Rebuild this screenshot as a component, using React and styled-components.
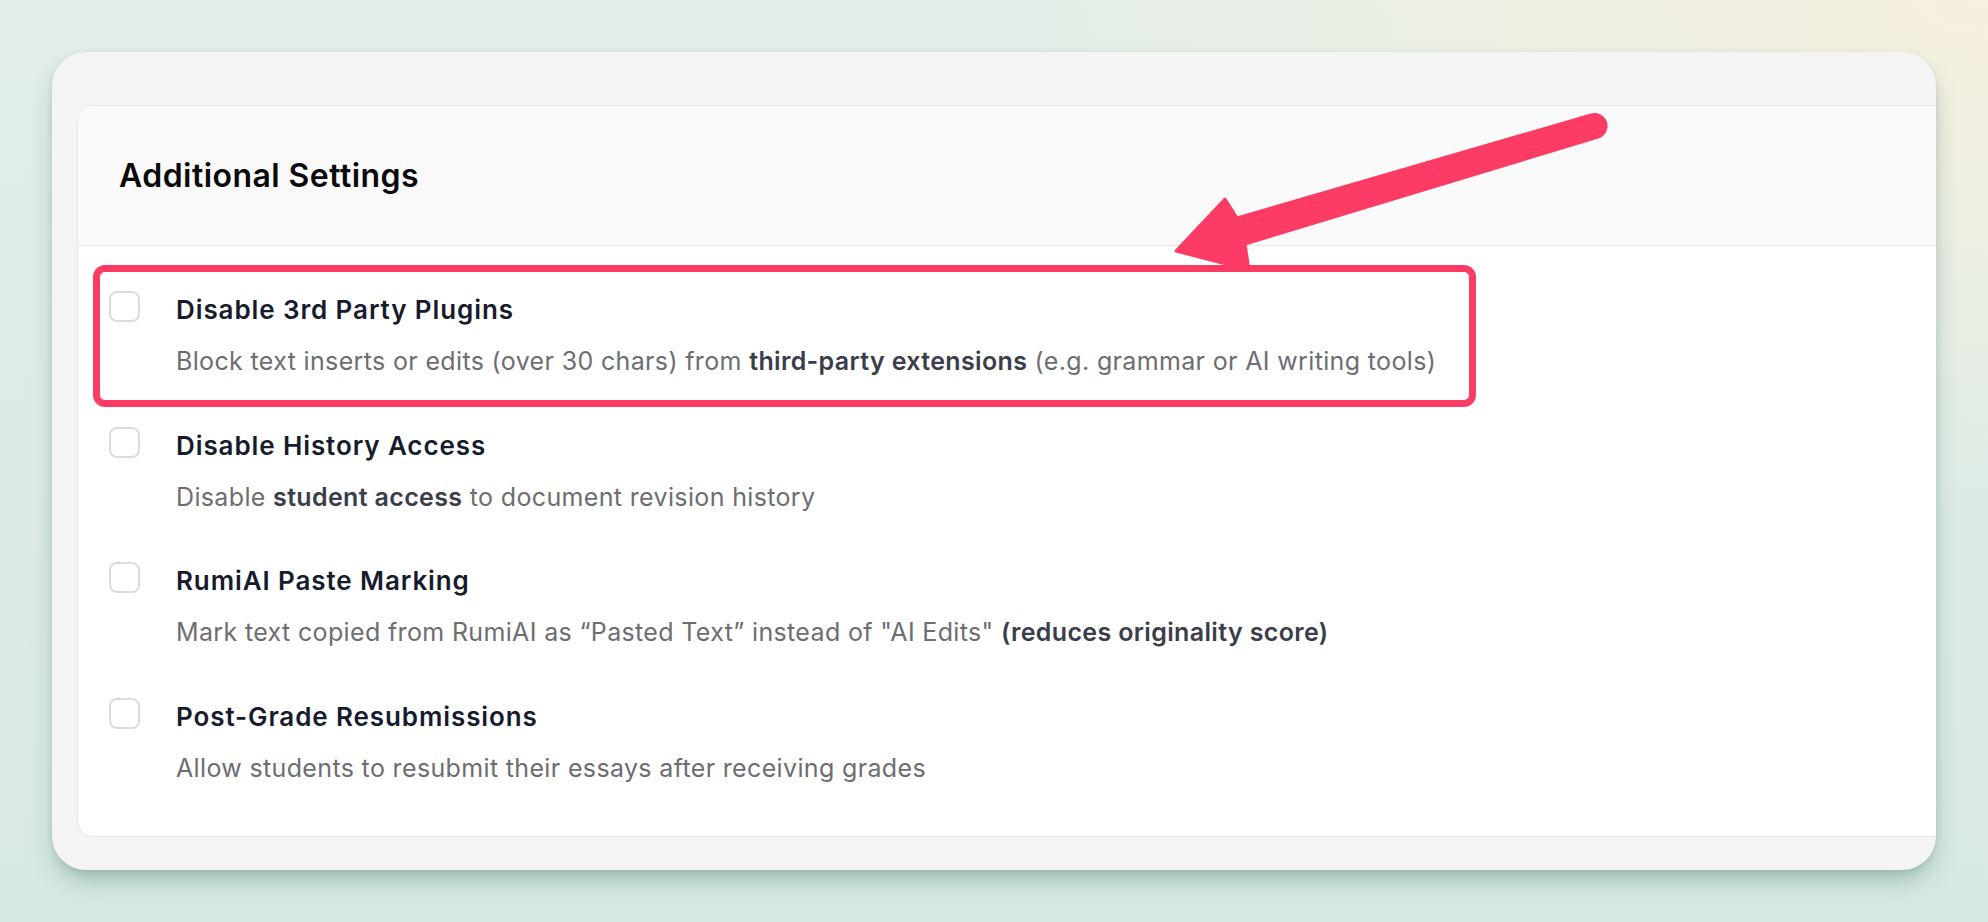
import React from "react";
import styled, { createGlobalStyle } from "styled-components";

const GlobalStyle = createGlobalStyle`
  html, body {
    margin: 0;
    padding: 0;
    width: 100%;
    height: 100%;
  }
  body {
    font-family: Inter, "Noto Sans", "Liberation Sans", sans-serif;
    -webkit-font-smoothing: antialiased;
  }
  * { box-sizing: border-box; }
`;

const Page = styled.div`
  position: relative;
  width: 100vw;
  height: 100vh;
  padding: 52px;
  display: flex;
  overflow: hidden;
  background:
    radial-gradient(ellipse 70% 80% at 100% 0%, #f6f0de 0%, rgba(246, 240, 222, 0) 70%),
    linear-gradient(180deg, #e3eee8 0%, #d7e9e4 100%);
`;

const Card = styled.section`
  flex: 1;
  display: flex;
  flex-direction: column;
  padding: 53px 0 33px 25px;
  background: #f4f4f4;
  border-radius: 34px;
  overflow: hidden;
  box-shadow: 0 14px 26px -6px rgba(40, 95, 85, 0.38), 0 2px 6px rgba(40, 95, 85, 0.12);
`;

const Panel = styled.div`
  flex: 1;
  display: flex;
  flex-direction: column;
  margin-right: -24px;
  background: #ffffff;
  border: 1px solid #e6e6e6;
  border-radius: 16px;
  overflow: hidden;
`;

const Header = styled.header`
  height: 140px;
  flex-shrink: 0;
  display: flex;
  align-items: center;
  padding-left: 41px;
  background: #fafafa;
  border-bottom: 1px solid #e6e6e6;
`;

const Title = styled.h2`
  margin: 0;
  font-size: 32px;
  line-height: 40px;
  font-weight: 600;
  color: #0a0a0a;
  letter-spacing: 0.45px;
`;

const Body = styled.div`
  position: relative;
  display: flex;
  flex-direction: column;
  gap: 49.5px;
  padding: 45px 0 0 31px;
`;

const Row = styled.div`
  display: flex;
  align-items: flex-start;
  gap: 36px;
`;

const Checkbox = styled.span`
  flex-shrink: 0;
  width: 31px;
  height: 31px;
  border: 2px solid #dcdcdc;
  border-radius: 8px;
  background: #fff;
`;

const TextBlock = styled.div`
  display: flex;
  flex-direction: column;
  gap: 19px;
  margin-top: 3px;
`;

const RowTitle = styled.div`
  font-size: 26px;
  line-height: 32px;
  font-weight: 600;
  letter-spacing: 0.9px;
  color: #171b2e;
`;

const RowDesc = styled.div`
  font-size: 25px;
  line-height: 32px;
  font-weight: 400;
  letter-spacing: 0.35px;
  color: #6d6d72;
  white-space: nowrap;

  strong {
    font-weight: 600;
    color: #3a3d4b;
  }
`;

const Highlight = styled.div`
  position: absolute;
  left: 15px;
  top: 19px;
  width: 1383px;
  height: 142px;
  border: 7.5px solid #fc3c64;
  border-radius: 12px;
  pointer-events: none;
`;

const ArrowLayer = styled.svg`
  position: absolute;
  left: 0;
  top: 0;
  width: 1988px;
  height: 922px;
  pointer-events: none;
`;

const settings = [
  {
    title: "Disable 3rd Party Plugins",
    desc: (
      <>
        Block text inserts or edits (over 30 chars) from <strong>third-party extensions</strong> (e.g. grammar or AI writing tools)
      </>
    ),
  },
  {
    title: "Disable History Access",
    desc: (
      <>
        Disable <strong>student access</strong> to document revision history
      </>
    ),
  },
  {
    title: "RumiAI Paste Marking",
    desc: (
      <>
        Mark text copied from RumiAI as “Pasted Text” instead of "AI Edits" <strong>(reduces originality score)</strong>
      </>
    ),
  },
  {
    title: "Post-Grade Resubmissions",
    desc: <>Allow students to resubmit their essays after receiving grades</>,
  },
];

export default function App() {
  return (
    <>
      <GlobalStyle />
      <Page>
        <Card>
          <Panel>
            <Header>
              <Title>Additional Settings</Title>
            </Header>
            <Body>
              {settings.map((s) => (
                <Row key={s.title}>
                  <Checkbox role="checkbox" aria-checked="false" />
                  <TextBlock>
                    <RowTitle>{s.title}</RowTitle>
                    <RowDesc>{s.desc}</RowDesc>
                  </TextBlock>
                </Row>
              ))}
              <Highlight />
            </Body>
          </Panel>
        </Card>
        <ArrowLayer viewBox="0 0 1988 922">
          <path
            d="M1176,251 L1225,199 L1237,218 L1591,115 A11.5,11.5 0 0 1 1598,137 L1245,244 L1249,270 Z"
            fill="#fc3c64"
            stroke="#fc3c64"
            strokeWidth="3"
            strokeLinejoin="round"
          />
        </ArrowLayer>
      </Page>
    </>
  );
}
